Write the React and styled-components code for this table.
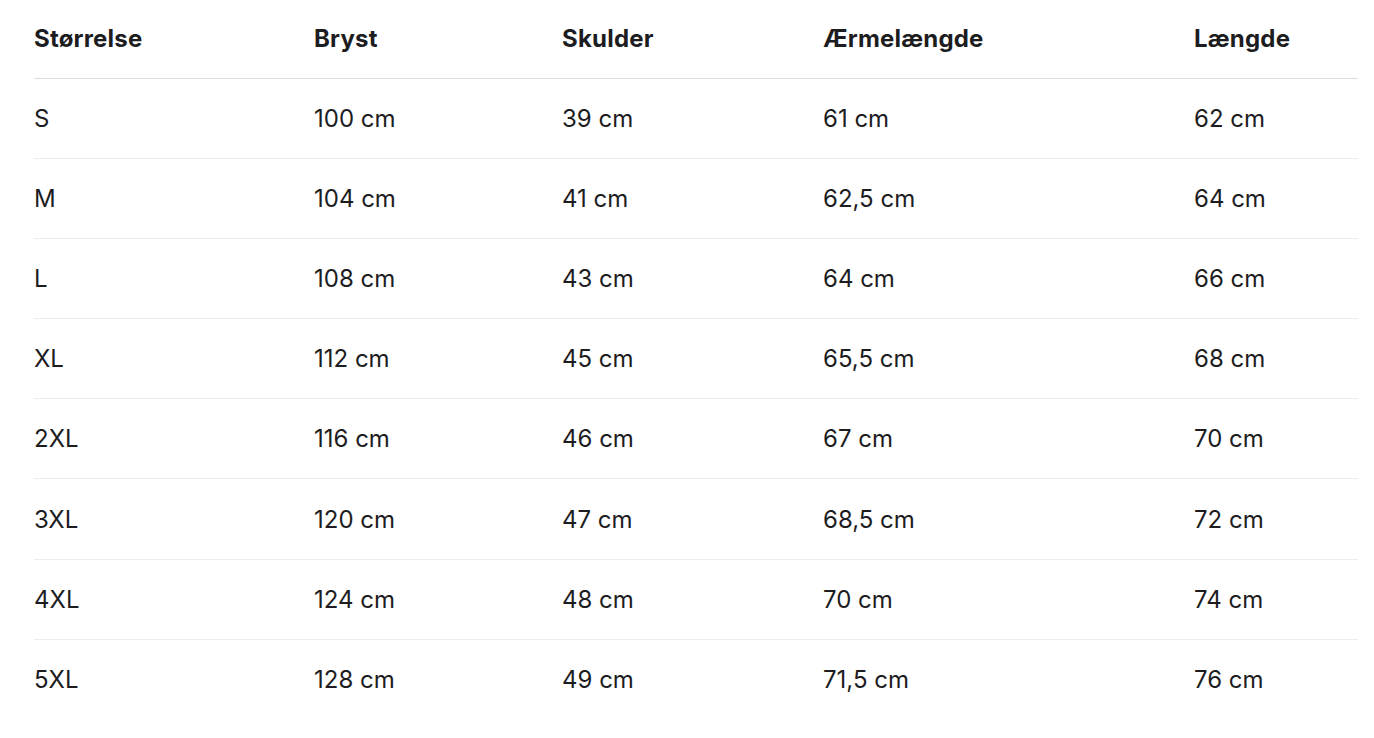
import React from 'react'
import styled, { createGlobalStyle } from 'styled-components'

const GlobalStyle = createGlobalStyle`
    body{
        margin: 0;
        background: #fff;
        font-family: Inter, "Liberation Sans", sans-serif;
        color: #1d1d1f;
    }
`;

const columns = ['Størrelse', 'Bryst', 'Skulder', 'Ærmelængde', 'Længde'];
const widths = [280, 248, 261, 371, 164];

const rows = [
    ['S', '100 cm', '39 cm', '61 cm', '62 cm'],
    ['M', '104 cm', '41 cm', '62,5 cm', '64 cm'],
    ['L', '108 cm', '43 cm', '64 cm', '66 cm'],
    ['XL', '112 cm', '45 cm', '65,5 cm', '68 cm'],
    ['2XL', '116 cm', '46 cm', '67 cm', '70 cm'],
    ['3XL', '120 cm', '47 cm', '68,5 cm', '72 cm'],
    ['4XL', '124 cm', '48 cm', '70 cm', '74 cm'],
    ['5XL', '128 cm', '49 cm', '71,5 cm', '76 cm'],
];

function App() {
    return (
        <>
            <GlobalStyle />
            <SizeChartStyled>
                <table>
                    <colgroup>
                        {widths.map((w, i) => <col key={i} width={w} />)}
                    </colgroup>
                    <thead>
                        <tr>
                            {columns.map(c => <th key={c}>{c}</th>)}
                        </tr>
                    </thead>
                    <tbody>
                        {rows.map(r => (
                            <tr key={r[0]}>
                                {r.map((v, i) => <td key={i}>{v}</td>)}
                            </tr>
                        ))}
                    </tbody>
                </table>
            </SizeChartStyled>
        </>
    )
}

const SizeChartStyled = styled.section`
    padding: 0 16px 0 34px;

    table{
        width: 1324px;
        border-collapse: collapse;
        table-layout: fixed;
    }
    th, td{
        text-align: left;
        padding: 0;
        font-size: 24px;
    }
    th{
        height: 77.5px;
        font-weight: 700;
        letter-spacing: 0.2px;
        border-bottom: 1px solid #dcdcdc;
    }
    td{
        height: 79.2px;
        font-weight: 400;
    }
    tbody tr:not(:last-child) td{
        border-bottom: 1px solid #ededed;
    }
`;

export default App;
